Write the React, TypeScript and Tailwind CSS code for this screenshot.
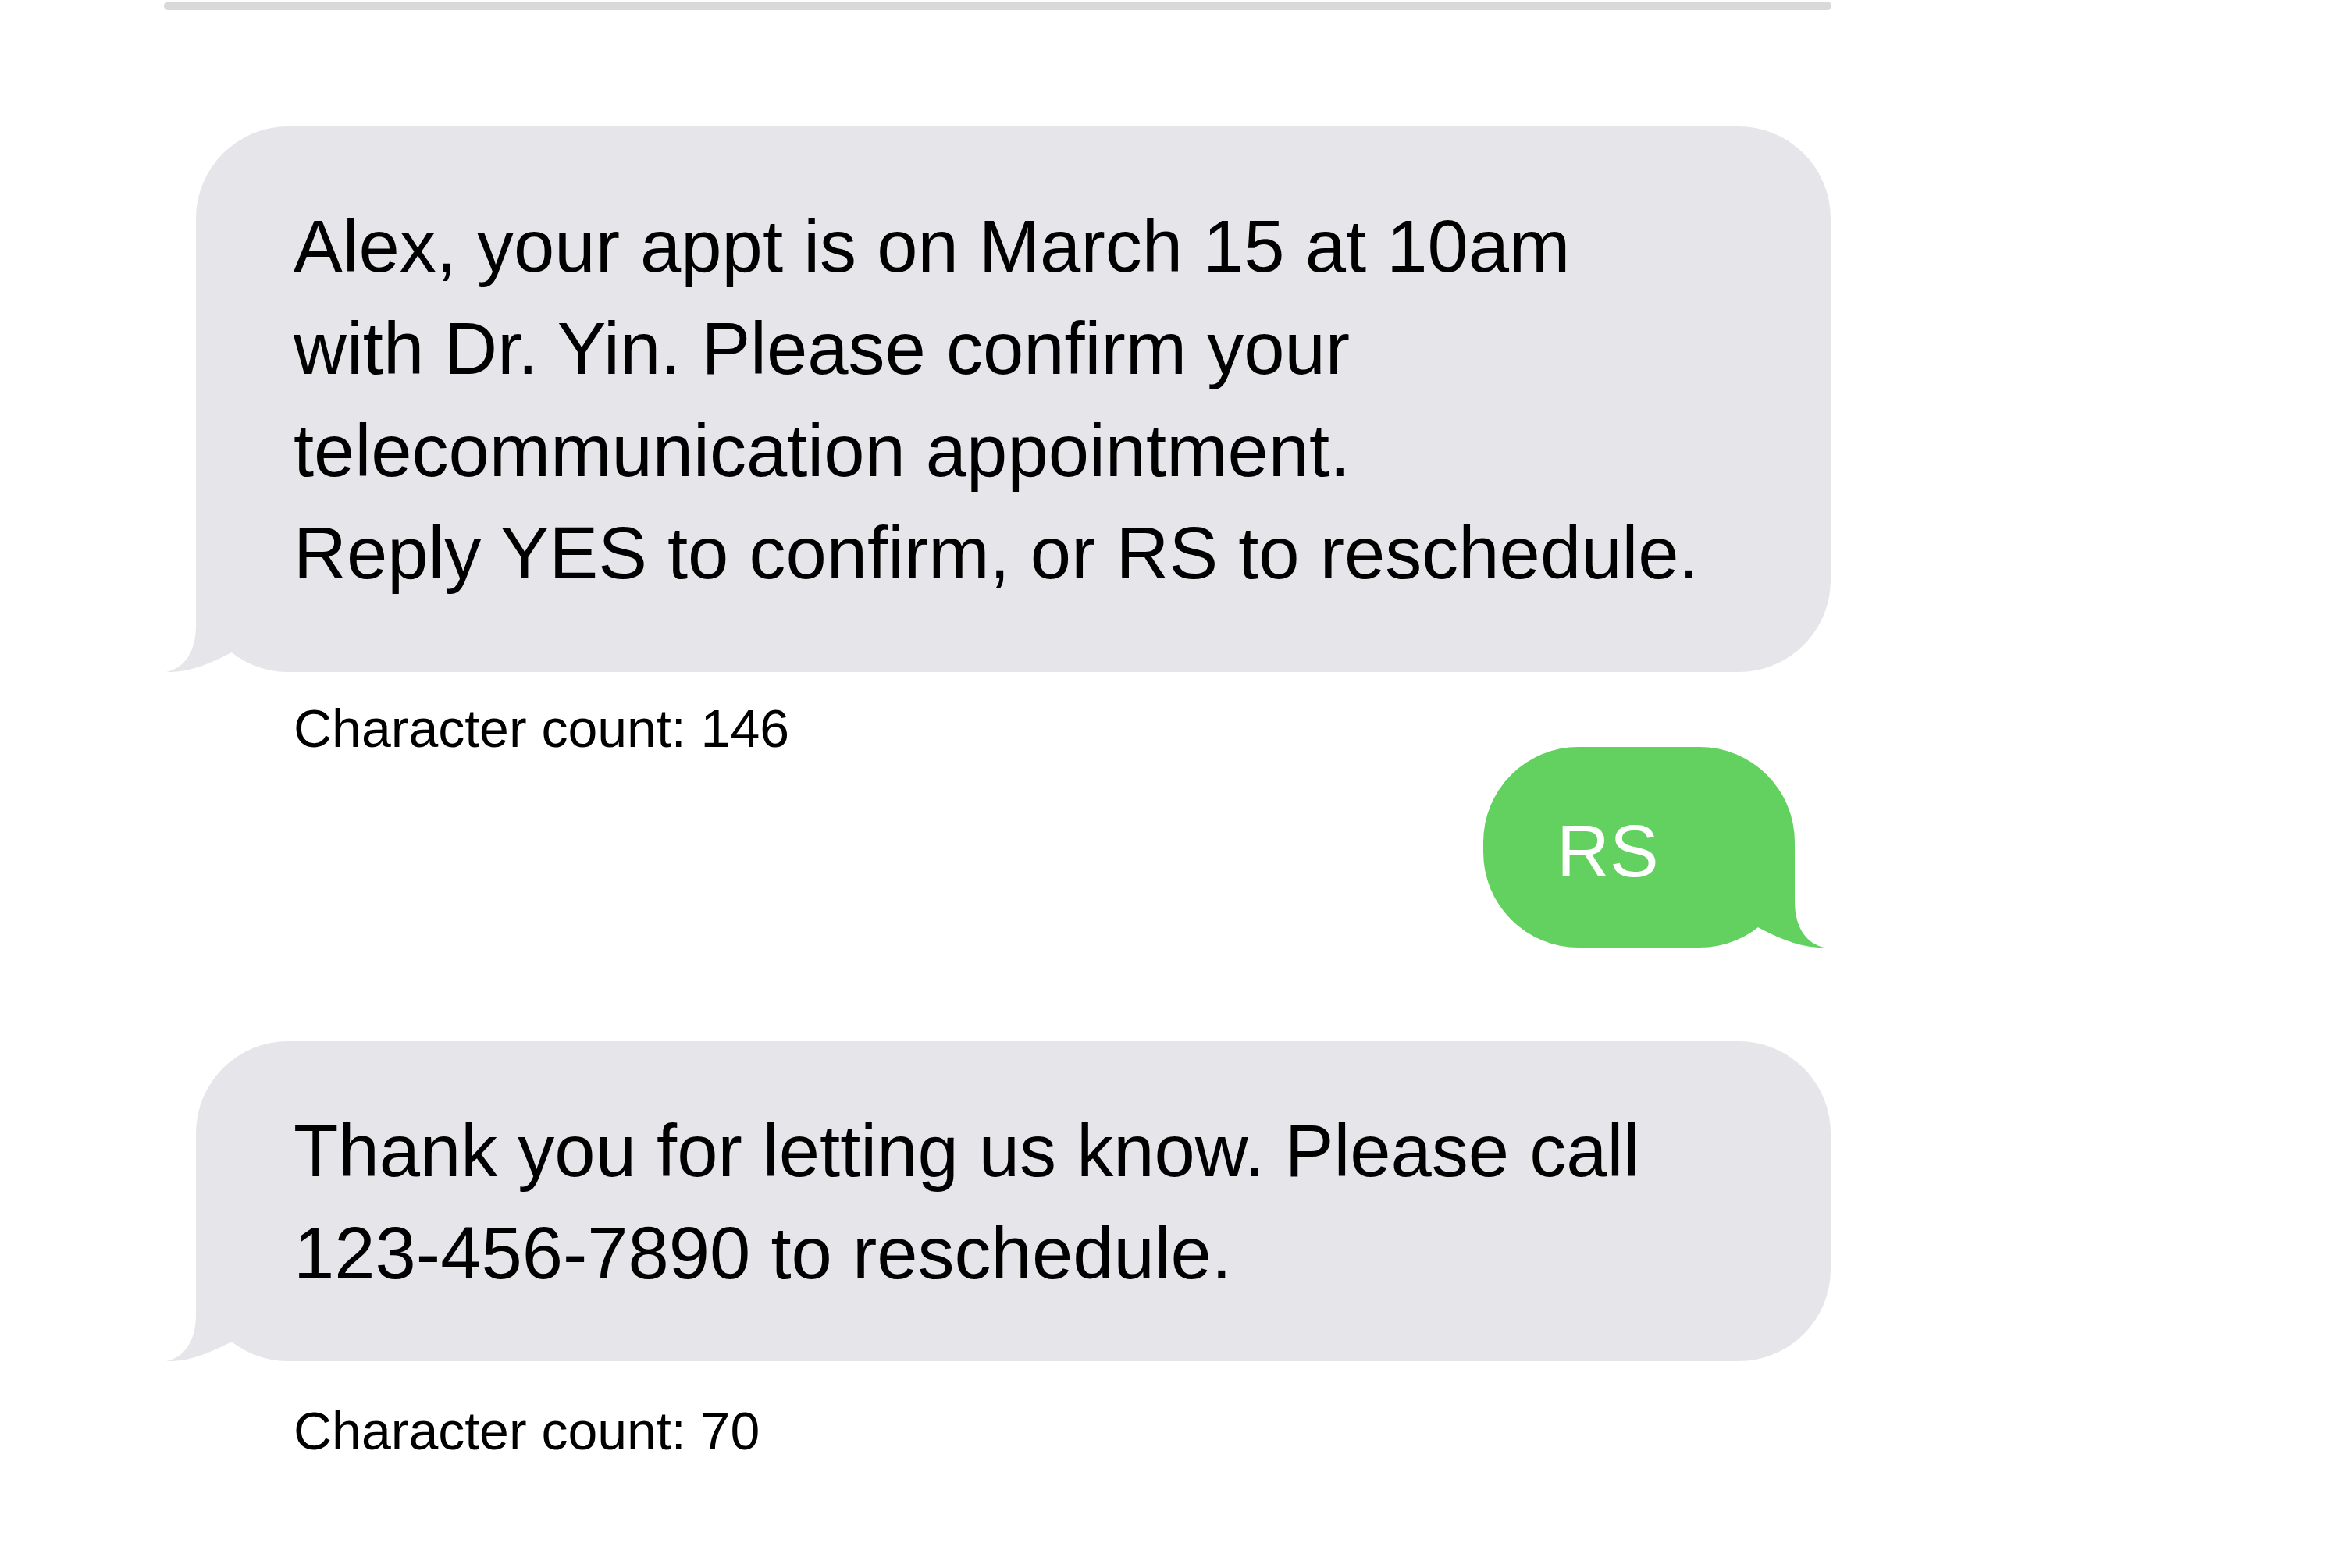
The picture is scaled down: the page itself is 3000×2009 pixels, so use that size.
import React from "react";

const GRAY = "#e5e5ea";
const GREEN = "#63d15f";

function LeftTail() {
  return (
    <svg
      className="absolute bottom-0 left-[-40px]"
      width="160"
      height="120"
      viewBox="0 0 160 120"
    >
      <path
        d="M40 0 L40 60 C40 95 25 115 2 120 C30 121 58 110 91 92 L100 40 L60 0 Z"
        fill={GRAY}
      />
    </svg>
  );
}

function RightTail() {
  return (
    <svg
      className="absolute bottom-0 right-[-40px]"
      width="160"
      height="120"
      viewBox="0 0 160 120"
    >
      <path
        d="M120 0 L120 60 C120 95 135 115 158 120 C130 121 102 110 69 92 L60 40 L100 0 Z"
        fill={GREEN}
      />
    </svg>
  );
}

function Incoming({ lines, pad }: { lines: string[]; pad: string }) {
  return (
    <div className={`relative ml-[41px] mr-[1px] rounded-[118px] bg-[#e5e5ea] pl-[125px] ${pad}`}>
      <p className="text-[94px] leading-[131px] text-black">
        {lines.map((l, i) => (
          <span key={i} className="block whitespace-nowrap">
            {l}
          </span>
        ))}
      </p>
      <LeftTail />
    </div>
  );
}

function CharCount({ n, className }: { n: number; className: string }) {
  return (
    <p className={`ml-[166px] text-[68px] leading-none text-black ${className}`}>
      Character count: {n}
    </p>
  );
}

export default function App() {
  return (
    <div
      className="w-[3000px] h-[2009px] bg-white overflow-hidden"
      style={{ fontFamily: '"Liberation Sans", Arial, sans-serif' }}
    >
      <div className="ml-[210px] w-[2136px] flex flex-col">
        <div className="mt-[2px] h-[11px] rounded-full bg-[#d9d9d9]" />

        <div className="mt-[149px]">
          <Incoming
            pad="pt-[88px] pb-[87px]"
            lines={[
              "Alex, your appt is on March 15 at 10am",
              "with Dr. Yin. Please confirm your",
              "telecommunication appointment.",
              "Reply YES to confirm, or RS to reschedule.",
            ]}
          />
        </div>

        <CharCount n={146} className="mt-[38px]" />

        <div className="self-end mr-[47px] mt-[-10px] relative">
          <div className="w-[399px] h-[257px] rounded-[122px] bg-[#63d15f] pl-[94px] pt-[87px]">
            <span className="block text-[94px] leading-none text-white">RS</span>
          </div>
          <RightTail />
        </div>

        <div className="mt-[120px]">
          <Incoming
            pad="pt-[75px] pb-[73px]"
            lines={[
              "Thank you for letting us know. Please call",
              "123-456-7890 to reschedule.",
            ]}
          />
        </div>

        <CharCount n={70} className="mt-[55px]" />
      </div>
    </div>
  );
}
